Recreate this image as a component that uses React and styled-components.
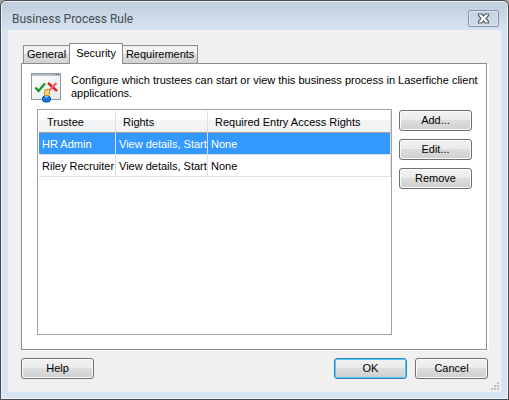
import React, { useState } from "react";
import styled, { createGlobalStyle } from "styled-components";

const tabs = ["General", "Security", "Requirements"];

const trustees = [
  { name: "HR Admin", rights: "View details, Start", entry: "None" },
  { name: "Riley Recruiter", rights: "View details, Start", entry: "None" },
];

const App = () => {
  const [activeTab, setActiveTab] = useState("Security");
  const [selected, setSelected] = useState("HR Admin");

  return (
    <>
      <GlobalStyle />
      <Window role="dialog" aria-labelledby="dialog-title">
        <TitleBar>
          <Title id="dialog-title">Business Process Rule</Title>
          <CloseButton aria-label="Close">
            <CloseIcon />
          </CloseButton>
        </TitleBar>
        <Body>
          <TabList role="tablist">
            {tabs.map((tab) => (
              <Tab
                key={tab}
                role="tab"
                aria-selected={tab === activeTab}
                $active={tab === activeTab}
                onClick={() => setActiveTab(tab)}
              >
                {tab}
              </Tab>
            ))}
          </TabList>
          <Panel role="tabpanel">
            <Intro>
              <RuleIcon />
              <p>
                Configure which trustees can start or view this business process
                in Laserfiche client applications.
              </p>
            </Intro>
            <Content>
              <ListBox>
                <TrusteeTable>
                  <colgroup>
                    <col width="77" />
                    <col width="92" />
                    <col />
                  </colgroup>
                  <thead>
                    <tr>
                      <th>Trustee</th>
                      <th>Rights</th>
                      <th>Required Entry Access Rights</th>
                    </tr>
                  </thead>
                  <tbody>
                    {trustees.map((trustee) => (
                      <Row
                        key={trustee.name}
                        $selected={trustee.name === selected}
                        onClick={() => setSelected(trustee.name)}
                      >
                        <td>{trustee.name}</td>
                        <td>{trustee.rights}</td>
                        <td>{trustee.entry}</td>
                      </Row>
                    ))}
                  </tbody>
                </TrusteeTable>
              </ListBox>
              <Actions>
                <Button>Add...</Button>
                <Button>Edit...</Button>
                <Button>Remove</Button>
              </Actions>
            </Content>
          </Panel>
          <Footer>
            <Button>Help</Button>
            <Confirm>
              <Button $primary>OK</Button>
              <Button>Cancel</Button>
            </Confirm>
          </Footer>
          <Grip />
        </Body>
      </Window>
    </>
  );
};

// Icons
const CloseIcon = () => (
  <svg width="13" height="11" viewBox="0 0 13 11" aria-hidden="true">
    <path
      d="M1.5 1h3.2l1.8 2 1.8-2h3.2v1.6L9 5.5l2.5 2.9V10H8.3L6.5 8l-1.8 2H1.5V8.4L4 5.5 1.5 2.6z"
      fill="#fff"
      stroke="#575d69"
      strokeWidth="1.2"
      strokeLinejoin="round"
    />
  </svg>
);

const RuleIcon = () => (
  <svg width="30" height="30" viewBox="0 0 30 30" aria-hidden="true">
    <defs>
      <linearGradient id="sheet" x1="0" y1="0" x2="1" y2="1">
        <stop offset="0" stopColor="#fff" />
        <stop offset="1" stopColor="#e6e8ec" />
      </linearGradient>
    </defs>
    <rect x="0.5" y="0.5" width="29" height="26" fill="url(#sheet)" stroke="#9299a2" />
    <path d="M1 1h28v2H1z" fill="#b4bfcc" />
    <path d="M23 1h1v1h-1zM25 1h1v1h-1zM27 1h1v1h-1z" fill="#5e6c7d" />
    <path d="M4.5 14.5l3 3.5 6.5-7.5" fill="none" stroke="#16951f" strokeWidth="2.2" />
    <path d="M17 10l9 8" fill="none" stroke="#dc2528" strokeWidth="2.4" />
    <path d="M25.5 10l-8 8" fill="none" stroke="#ee5a5c" strokeWidth="2" />
    <path
      d="M11.5 24.5l2-2h4l2 2v3l-1.5 1.5h-5l-1.5-1.5z"
      fill="#1976cf"
      stroke="#0b5fb5"
    />
    <path d="M13.5 23l2 2.5 2-2.5z" fill="#7fc4ff" />
    <rect x="13.5" y="16.5" width="5" height="6" rx="1" fill="#f8cf78" stroke="#c98f2c" />
  </svg>
);

const Grip = () => (
  <GripSvg width="9" height="9" viewBox="0 0 9 9" aria-hidden="true">
    <path
      d="M6 0h2v2H6zM3 3h2v2H3zM6 3h2v2H6zM0 6h2v2H0zM3 6h2v2H3zM6 6h2v2H6z"
      fill="#bdbdbd"
    />
  </GripSvg>
);

// Styles
const GlobalStyle = createGlobalStyle`
  * {
    box-sizing: border-box;
  }
  body {
    margin: 0;
    background: #a5a29c;
    color: #000;
    font-family: "Liberation Sans", Arial, sans-serif;
    font-size: 11px;
    line-height: 13px;
  }
  h1, p {
    margin: 0;
  }
  button {
    font: inherit;
    color: inherit;
  }
`;

const Window = styled.div`
  min-height: 100vh;
  display: flex;
  flex-direction: column;
  padding: 0 7px 7px;
  border: 1px solid #4a4a50;
  border-radius: 6px 6px 0 0;
  background: linear-gradient(#bfcddb, #d7e4f2 30px);
  box-shadow: inset 0 0 0 1px #eaf2fa;
`;

const TitleBar = styled.header`
  height: 29px;
  flex: none;
  display: flex;
  justify-content: space-between;
  padding: 9px 2px 0 4px;
`;

const Title = styled.h1`
  font-family: Roboto, "Open Sans", sans-serif;
  font-size: 12px;
  line-height: 18px;
  font-weight: 400;
  color: #454c55;
`;

const CloseButton = styled.button`
  width: 31px;
  height: 17px;
  display: flex;
  align-items: center;
  justify-content: center;
  padding: 0;
  border: 1px solid #8793b0;
  border-radius: 2px;
  background: linear-gradient(#c6d3e1, #cddae7);
  box-shadow: inset 0 0 0 1px #dbe5ef;
`;

const Body = styled.main`
  position: relative;
  flex: 1;
  display: flex;
  flex-direction: column;
  padding: 13px;
  background: #f0f0f0;
`;

const TabList = styled.div`
  display: flex;
  align-items: flex-end;
  height: 20px;
  padding-left: 2px;
`;

const Tab = styled.button`
  position: relative;
  height: ${({ $active }) => ($active ? "21px" : "18px")};
  padding: ${({ $active }) => ($active ? "0 6px 1px" : "0 3px")};
  margin-right: -1px;
  margin-bottom: ${({ $active }) => ($active ? "-1px" : "0")};
  z-index: ${({ $active }) => ($active ? 1 : 0)};
  border: 1px solid #898c95;
  border-bottom: 0;
  background: ${({ $active }) =>
    $active ? "#fff" : "linear-gradient(#f2f2f2 50%, #dddddd 50%, #d2d2d2)"};
`;

const Panel = styled.section`
  flex: 1;
  display: flex;
  flex-direction: column;
  margin: 0 1px 1px 0;
  padding: 8px 14px 14px 15px;
  border: 1px solid #898c95;
  background: #fff;
  box-shadow: 2px 1px 0 #fff;
`;

const Intro = styled.div`
  display: flex;
  gap: 10px;
  height: 37px;
  margin: 0 -10px 0 -6px;

  svg {
    flex: none;
    margin-top: 1px;
  }
  p {
    padding-top: 2px;
  }
`;

const Content = styled.div`
  flex: 1;
  display: flex;
  gap: 7px;
`;

const ListBox = styled.div`
  flex: 1;
  padding: 1px 0 0 1px;
  border: 1px solid #a0a0a5;
`;

const TrusteeTable = styled.table`
  width: 100%;
  table-layout: fixed;
  border-collapse: separate;
  border-spacing: 0;

  th,
  td {
    height: 22px;
    padding: 1px 3px 0;
    text-align: left;
    font-weight: 400;
    white-space: nowrap;
    border-right: 1px solid #dfdfdf;
    border-bottom: 1px solid #dfdfdf;
  }
  th {
    padding: 1px 0 0 8px;
    background: linear-gradient(#fff 45%, #f5f5f6 45%, #f1f2f4);
    border-bottom-color: #a0a0a0;
  }
  th + th {
    padding-left: 7px;
  }
`;

const Row = styled.tr`
  background: ${({ $selected }) => ($selected ? "#3399ff" : "#fff")};
  color: ${({ $selected }) => ($selected ? "#fff" : "#000")};
`;

const Actions = styled.div`
  display: flex;
  flex-direction: column;
  gap: 8px;
  padding-top: 1px;
`;

const Button = styled.button`
  width: 73px;
  height: 21px;
  padding: 0;
  border: 1px solid ${({ $primary }) => ($primary ? "#3c7fb1" : "#707070")};
  border-radius: 3px;
  background: linear-gradient(#f2f2f2, #ebebeb 48%, #dddddd 50%, #cfcfcf);
  box-shadow: inset 0 0 0 1px ${({ $primary }) => ($primary ? "#48d0f4" : "#fafafa")};
`;

const Footer = styled.footer`
  display: flex;
  justify-content: space-between;
  padding-top: 7px;
`;

const Confirm = styled.div`
  display: flex;
  gap: 8px;
`;

const GripSvg = styled.svg`
  position: absolute;
  right: 1px;
  bottom: 1px;
`;

export default App;
